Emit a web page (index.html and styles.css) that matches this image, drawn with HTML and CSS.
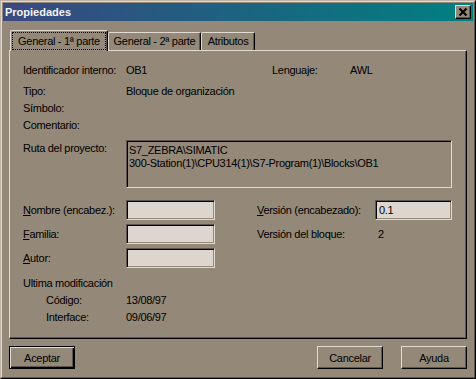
FILE: index.html
```html
<!DOCTYPE html>
<html lang="es">
<head>
<meta charset="utf-8">
<title>Propiedades</title>
<link rel="stylesheet" href="styles.css">
</head>
<body>
<div class="window">
  <div class="frame">
    <div class="titlebar">
      <span class="title">Propiedades</span>
      <span class="close">
        <svg width="14" height="12" viewBox="0 0 14 12">
          <path d="M3.5 2.5 L10.5 9.5 M10.5 2.5 L3.5 9.5" stroke="#000" stroke-width="2" fill="none"/>
        </svg>
      </span>
    </div>
    <div class="content">
      <div class="tabs">
        <div class="tab tab-active"><span class="focus">General - 1ª parte</span></div>
        <div class="tab tab-2">General - 2ª parte</div>
        <div class="tab tab-3">Atributos</div>
      </div>
      <div class="panel">
        <div class="row row-first">
          <span class="lbl">Identificador interno:</span>
          <span class="val-id">OB1</span>
          <span class="lbl-lang">Lenguaje:</span>
          <span>AWL</span>
        </div>
        <div class="row"><span class="lbl">Tipo:</span><span>Bloque de organización</span></div>
        <div class="row"><span class="lbl">Símbolo:</span></div>
        <div class="row"><span class="lbl">Comentario:</span></div>
        <div class="ruta">
          <span class="lbl row">Ruta del proyecto:</span>
          <div class="pathbox">S7_ZEBRA\SIMATIC<br>300-Station(1)\CPU314(1)\S7-Program(1)\Blocks\OB1</div>
        </div>
        <div class="fields">
          <div class="frow">
            <span class="lbl"><u>N</u>ombre (encabez.):</span>
            <span class="input"></span>
            <span class="rlbl"><u>V</u>ersión (encabezado):</span>
            <span class="input input-small">0.1</span>
          </div>
          <div class="frow">
            <span class="lbl"><u>F</u>amilia:</span>
            <span class="input"></span>
            <span class="rlbl">Versión del bloque:</span>
            <span class="rval">2</span>
          </div>
          <div class="frow">
            <span class="lbl"><u>A</u>utor:</span>
            <span class="input"></span>
          </div>
        </div>
        <div class="row row-mod">Ultima modificación</div>
        <div class="row"><span class="sub">Código:</span><span>13/08/97</span></div>
        <div class="row"><span class="sub">Interface:</span><span>09/06/97</span></div>
      </div>
      <div class="buttons">
        <button class="btn btn-default">Aceptar</button>
        <span class="spacer"></span>
        <button class="btn">Cancelar</button>
        <button class="btn">Ayuda</button>
      </div>
    </div>
  </div>
</div>
</body>
</html>
```
FILE: styles.css
```css
* { box-sizing: border-box; }

html, body {
  margin: 0;
  padding: 0;
  background: #948878;
}

body {
  font-family: "Liberation Sans", Arial, sans-serif;
  font-size: 11px;
  letter-spacing: -0.3px;
  color: #000;
}

.window {
  width: 476px;
  height: 379px;
  border: 1px solid;
  border-color: #bdb3a6 #000 #000 #bdb3a6;
  background: #948878;
}

.frame {
  height: 100%;
  border: 1px solid;
  border-color: #e2dbd4 #5e564c #5e564c #e2dbd4;
  padding: 1px;
}

.titlebar {
  height: 18px;
  display: flex;
  align-items: center;
  justify-content: space-between;
  padding: 0 2px 0 2px;
  background: linear-gradient(to right, #3b4880, #1f6080 45%, #008080);
}

.title {
  font-weight: bold;
  color: #f4f4f4;
  letter-spacing: 0;
  line-height: 18px;
}

.close {
  width: 16px;
  height: 14px;
  display: flex;
  align-items: center;
  justify-content: center;
  background: #948878;
  border: 1px solid;
  border-color: #e2dbd4 #000 #000 #e2dbd4;
  box-shadow: inset -1px -1px 0 #5e564c;
}

.close svg { display: block; }

.content {
  padding: 9px 6px 0 6px;
}

.tabs {
  display: flex;
  align-items: flex-end;
  height: 20px;
  padding-left: 1px;
}

.tab {
  height: 18px;
  line-height: 17px;
  text-align: center;
  border-top: 1px solid #e2dbd4;
  border-left: 1px solid #e2dbd4;
  border-right: 1px solid #000;
  border-radius: 2px 2px 0 0;
  box-shadow: inset -1px 0 0 #5e564c;
  background: #948878;
}

.tab-2 { width: 93px; }
.tab-3 { width: 54px; }

.tab-active {
  position: relative;
  z-index: 1;
  width: 98px;
  height: 21px;
  margin-bottom: -1px;
}

.focus {
  display: block;
  height: 18px;
  margin: 1px 1px 0 1px;
  border: 1px dotted #000;
  line-height: 16px;
}

.panel {
  height: 289px;
  border: 1px solid;
  border-color: #e2dbd4 #000 #000 #e2dbd4;
  box-shadow: inset -1px -1px 0 #5e564c;
  padding: 11px 0 0 13px;
}

.row {
  display: flex;
  height: 17px;
  line-height: 17px;
}

.row-first { margin-bottom: 4px; }

.lbl {
  display: block;
  width: 103px;
  flex: none;
}

.val-id { width: 146px; }
.lbl-lang { width: 78px; }

.ruta {
  display: flex;
  margin-top: 6px;
}

.pathbox {
  width: 326px;
  height: 48px;
  border: 1px solid;
  border-color: #5e564c #e2dbd4 #e2dbd4 #5e564c;
  box-shadow: inset 1px 1px 0 #000, inset -1px -1px 0 #948878;
  padding: 3px 0 0 2px;
  line-height: 13px;
  white-space: nowrap;
}

.fields {
  display: flex;
  flex-direction: column;
  gap: 4px;
  margin-top: 12px;
}

.frow {
  display: flex;
  align-items: center;
  height: 20px;
}

.input {
  width: 89px;
  height: 20px;
  flex: none;
  background: #ddd6cf;
  border: 1px solid;
  border-color: #5e564c #e2dbd4 #e2dbd4 #5e564c;
  box-shadow: inset 1px 1px 0 #000, inset -1px -1px 0 #948878;
  padding: 0 0 0 3px;
  line-height: 18px;
}

.input-small { width: 77px; }

.rlbl {
  width: 118px;
  margin-left: 42px;
}

.rval { padding-left: 3px; }

.row-mod { margin-top: 7px; }

.sub {
  width: 103px;
  padding-left: 23px;
}

.buttons {
  display: flex;
  margin-top: 7px;
}

.spacer { flex: 1; }

.btn {
  width: 66px;
  height: 23px;
  margin: 0;
  padding: 0;
  font: inherit;
  letter-spacing: -0.3px;
  color: #000;
  background: #948878;
  border: 1px solid;
  border-color: #e2dbd4 #000 #000 #e2dbd4;
  box-shadow: inset -1px -1px 0 #5e564c;
  border-radius: 0;
}

.btn + .btn { margin-left: 18px; }

.btn-default {
  border-color: #000;
  box-shadow: inset 1px 1px 0 #e2dbd4, inset -1px -1px 0 #000, inset -2px -2px 0 #5e564c;
}
```
